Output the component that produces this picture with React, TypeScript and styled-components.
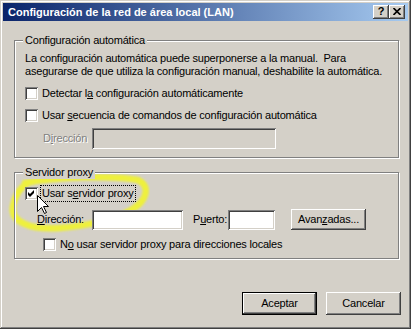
import React from "react";
import styled, { createGlobalStyle } from "styled-components";

const FACE = "#d4d0c8";

const GlobalStyle = createGlobalStyle`
  html, body { margin: 0; padding: 0; background: ${FACE}; }
  body { font-family: "Liberation Sans", Arial, sans-serif; font-size: 11px; }
`;

const Window = styled.div`
  position: relative;
  box-sizing: border-box;
  width: 411px;
  height: 329px;
  padding: 3px;
  background: ${FACE};
  box-shadow: inset -1px -1px #404040, inset 1px 1px ${FACE},
    inset -2px -2px #808080, inset 2px 2px #ffffff;
  display: flex;
  flex-direction: column;
  font-family: "Liberation Sans", Arial, sans-serif;
  font-size: 11px;
  letter-spacing: -0.2px;
  color: #000;
`;

const TitleBar = styled.div`
  height: 18px;
  display: flex;
  align-items: center;
  padding: 0 3px 0 5px;
  background: linear-gradient(to right, #0a246a, #a6caf0);
`;

const TitleText = styled.div`
  flex: 1;
  color: #fff;
  font-weight: bold;
  font-size: 11px;
  letter-spacing: 0;
  line-height: 18px;
  white-space: nowrap;
`;

const CaptionButton = styled.div`
  box-sizing: border-box;
  width: 16px;
  height: 14px;
  background: ${FACE};
  box-shadow: inset -1px -1px #404040, inset 1px 1px #ffffff,
    inset -2px -2px #808080, inset 2px 2px ${FACE};
  display: flex;
  align-items: center;
  justify-content: center;
  font-weight: bold;
  font-size: 11px;
  line-height: 1;
  padding-bottom: 1px;
`;

const Body = styled.div`
  position: relative;
  z-index: 1;
  flex: 1;
  display: flex;
  flex-direction: column;
  padding: 19px 9px 0 11px;
`;

const GroupBox = styled.div<{ $h: number; $gap?: number }>`
  position: relative;
  box-sizing: border-box;
  height: ${(p) => p.$h}px;
  margin-top: ${(p) => p.$gap ?? 0}px;
  border: 1px solid #808080;
  box-shadow: 1px 1px 0 #ffffff, inset 1px 1px 0 #ffffff;
  padding: ${(p) => (p.$h > 100 ? 11 : 12)}px 10px 0 10px;
  display: flex;
  flex-direction: column;
`;

const GroupTitle = styled.div`
  position: absolute;
  top: -7px;
  left: 8px;
  padding: 0 2px;
  line-height: 13px;
  background: ${FACE};
  white-space: nowrap;
`;

const Description = styled.p`
  margin: 0;
  line-height: 13px;
  white-space: pre;
`;

const CheckRow = styled.div<{ $top: number; $indent?: number }>`
  display: flex;
  align-items: center;
  gap: 2px;
  margin-top: ${(p) => p.$top}px;
  padding-left: ${(p) => p.$indent ?? 0}px;
`;

const Box = styled.span`
  position: relative;
  box-sizing: border-box;
  width: 13px;
  height: 13px;
  flex: none;
  background: #fff;
  box-shadow: inset 1px 1px #808080, inset -1px -1px #ffffff,
    inset 2px 2px #404040, inset -2px -2px ${FACE};
  display: flex;
`;

const CheckLabel = styled.span<{ $focus?: boolean }>`
  line-height: 13px;
  padding: 1px 1px;
  border: 1px ${(p) => (p.$focus ? "dotted #000" : "solid transparent")};
  white-space: nowrap;
`;

const FieldRow = styled.div<{ $top: number; $indent: number }>`
  display: flex;
  align-items: center;
  margin-top: ${(p) => p.$top}px;
  padding-left: ${(p) => p.$indent}px;
`;

const FieldLabel = styled.span<{ $w: number; $disabled?: boolean }>`
  width: ${(p) => p.$w}px;
  flex: none;
  line-height: 13px;
  white-space: nowrap;
  color: ${(p) => (p.$disabled ? "#808080" : "#000")};
  text-shadow: ${(p) => (p.$disabled ? "1px 1px 0 #ffffff" : "none")};
`;

const TextField = styled.div<{ $w: number; $h: number; $disabled?: boolean }>`
  box-sizing: border-box;
  width: ${(p) => p.$w}px;
  height: ${(p) => p.$h}px;
  flex: none;
  background: ${(p) => (p.$disabled ? FACE : "#fff")};
  box-shadow: inset 1px 1px #808080, inset -1px -1px #ffffff,
    inset 2px 2px #404040, inset -2px -2px ${FACE};
`;

const PushButton = styled.div<{ $default?: boolean; $w: number; $h: number }>`
  box-sizing: border-box;
  width: ${(p) => p.$w}px;
  height: ${(p) => p.$h}px;
  flex: none;
  display: flex;
  align-items: center;
  justify-content: center;
  background: ${FACE};
  border: ${(p) => (p.$default ? "1px solid #000" : "none")};
  box-shadow: inset -1px -1px #404040, inset 1px 1px #ffffff,
    inset -2px -2px #808080, inset 2px 2px ${FACE};
  white-space: nowrap;
  line-height: 13px;
`;

const ButtonRow = styled.div`
  display: flex;
  justify-content: flex-end;
  gap: 9px;
  margin-top: 33px;
  margin-right: -2px;
`;

const Mn = styled.span`
  text-decoration: underline;
  text-underline-offset: 1px;
`;

const Highlight = styled.svg`
  position: absolute;
  left: 5px;
  top: 172px;
  z-index: 0;
  pointer-events: none;
`;

const Cursor = styled.svg`
  position: absolute;
  left: 37px;
  top: 195px;
  z-index: 2;
  pointer-events: none;
`;

const Check = () => (
  <svg width="13" height="13" viewBox="0 0 13 13">
    <polygon points="3,5 5,7 9,3 9,6 5,10 3,8" fill="#000" />
  </svg>
);

export default function App() {
  return (
    <>
      <GlobalStyle />
      <Window>
        <TitleBar>
          <TitleText>Configuración de la red de área local (LAN)</TitleText>
          <CaptionButton>?</CaptionButton>
          <CaptionButton>
            <svg width="8" height="7" viewBox="0 0 8 7">
              <path d="M0.5 0 L7.5 7 M7.5 0 L0.5 7" stroke="#000" strokeWidth="1.6" />
            </svg>
          </CaptionButton>
        </TitleBar>
        <Highlight width="145" height="64" viewBox="5 172 145 64">
          <defs>
            <filter id="soft" x="-10%" y="-10%" width="120%" height="120%">
              <feGaussianBlur stdDeviation="0.8" />
            </filter>
          </defs>
          <path
            d="M25 183 C55 177, 115 175, 138 180 C151 186, 147 201, 131 210 C115 219, 95 225, 60 228 C30 230, 10 222, 13 206 C15 195, 19 188, 28 183"
            fill="none"
            stroke="#eef03e"
            strokeWidth="6.5"
            strokeLinecap="round"
            filter="url(#soft)"
          />
        </Highlight>
        <Body>
          <GroupBox $h={118}>
            <GroupTitle>Configuración automática</GroupTitle>
            <Description>
              {"La configuración automática puede superponerse a la manual.  Para\nasegurarse de que utiliza la configuración manual, deshabilite la automática."}
            </Description>
            <CheckRow $top={7}>
              <Box />
              <CheckLabel>
                Detectar l<Mn>a</Mn> configuración automáticamente
              </CheckLabel>
            </CheckRow>
            <CheckRow $top={5}>
              <Box />
              <CheckLabel>
                Usar <Mn>s</Mn>ecuencia de comandos de configuración automática
              </CheckLabel>
            </CheckRow>
            <FieldRow $top={4} $indent={18}>
              <FieldLabel $w={49} $disabled>
                D<Mn>i</Mn>rección
              </FieldLabel>
              <TextField $w={184} $h={21} $disabled />
            </FieldRow>
          </GroupBox>
          <GroupBox $h={87} $gap={14}>
            <GroupTitle>Servidor proxy</GroupTitle>
            <CheckRow $top={0}>
              <Box>
                <Check />
              </Box>
              <CheckLabel $focus>
                Usar s<Mn>e</Mn>rvidor proxy
              </CheckLabel>
            </CheckRow>
            <FieldRow $top={7} $indent={12}>
              <FieldLabel $w={55}>
                <Mn>D</Mn>irección:
              </FieldLabel>
              <TextField $w={91} $h={20} />
              <FieldLabel $w={35} style={{ marginLeft: 10 }}>
                P<Mn>u</Mn>erto:
              </FieldLabel>
              <TextField $w={47} $h={20} />
              <PushButton $w={75} $h={21} style={{ marginLeft: 16 }}>
                Avan<Mn>z</Mn>adas...
              </PushButton>
            </FieldRow>
            <CheckRow $top={6} $indent={18}>
              <Box />
              <CheckLabel>
                N<Mn>o</Mn> usar servidor proxy para direcciones locales
              </CheckLabel>
            </CheckRow>
          </GroupBox>
          <ButtonRow>
            <PushButton $default $w={75} $h={23}>
              Aceptar
            </PushButton>
            <PushButton $w={75} $h={23}>
              Cancelar
            </PushButton>
          </ButtonRow>
        </Body>
        <Cursor width="12" height="19" viewBox="0 0 12 19">
          <path
            d="M0.5 0.5 L0.5 16.5 L4.5 12.5 L7.5 18.5 L9.5 17.5 L6.5 11.5 L11.5 11.5 Z"
            fill="#fff"
            stroke="#000"
            strokeWidth="1"
          />
        </Cursor>
      </Window>
    </>
  );
}
